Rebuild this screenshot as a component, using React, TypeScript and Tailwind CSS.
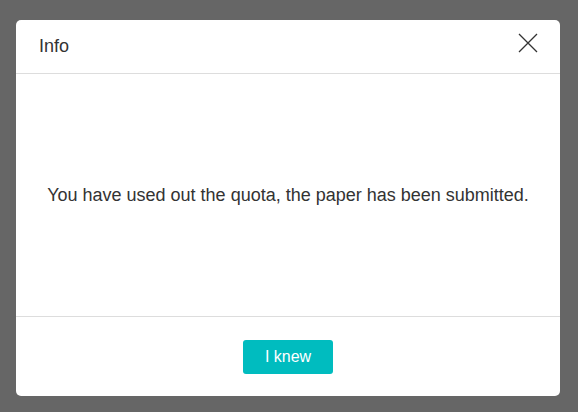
export default function App() {
  return (
    <div className="w-[578px] h-[412px] bg-[#666666] pt-[20px] pl-[16px]" style={{ fontFamily: '"Liberation Sans", Arial, sans-serif' }}>
      <div className="w-[544px] h-[376px] bg-white rounded-[5px] flex flex-col">
        <div className="h-[53px] flex items-center justify-between pl-[23px] pr-[22px] border-b border-[#dddddd] box-content">
          <span className="text-[18px] text-[#333333]">Info</span>
          <svg width="20" height="20" viewBox="0 0 20 20" className="mt-[-8px]">
            <path d="M1 1L19 19M19 1L1 19" stroke="#333" strokeWidth="1.3" fill="none" />
          </svg>
        </div>
        <div className="h-[242px] flex items-center justify-center border-b border-[#dddddd] box-content">
          <p className="text-[18px] text-[#333333] mt-[1px]">You have used out the quota, the paper has been submitted.</p>
        </div>
        <div className="flex-1 flex items-center justify-center">
          <button className="w-[90px] h-[34px] bg-[#00bcbf] text-white text-[16px] rounded-[3px] mt-[1px]">I knew</button>
        </div>
      </div>
    </div>
  );
}
